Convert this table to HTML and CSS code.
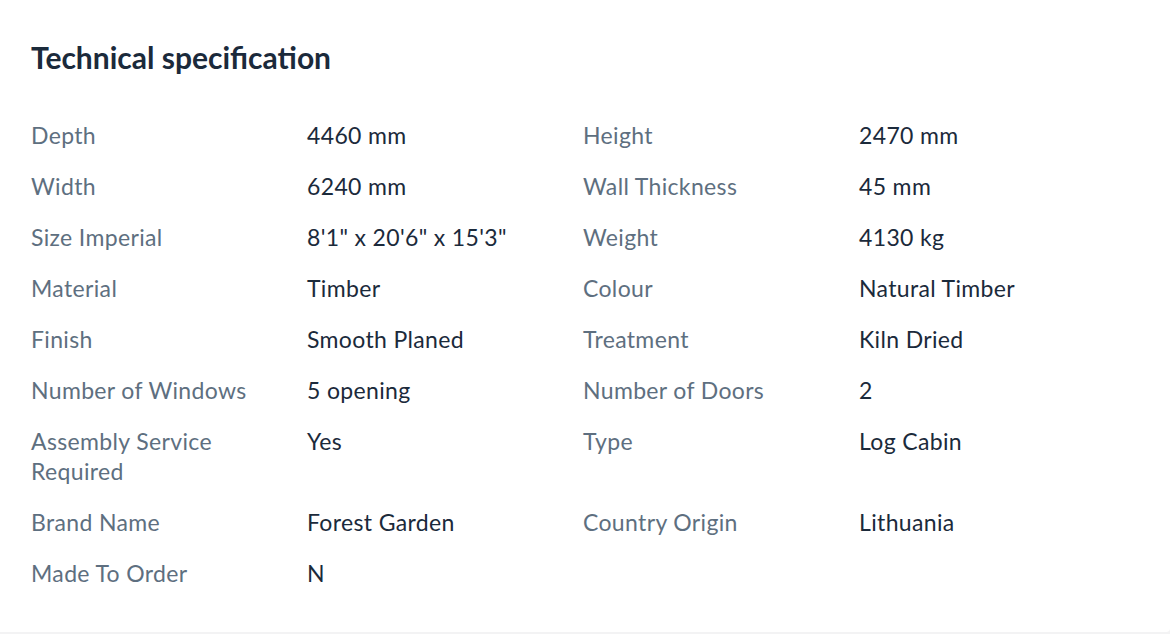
FILE: index.html
```html
<!DOCTYPE html>
<html lang="en">
<head>
<meta charset="utf-8">
<title>Technical specification</title>
<link rel="stylesheet" href="styles.css">
</head>
<body>
<section class="card">
  <h2 class="title">Technical specification</h2>
  <dl class="specs">
    <dt>Depth</dt><dd>4460 mm</dd>
    <dt>Height</dt><dd>2470 mm</dd>
    <dt>Width</dt><dd>6240 mm</dd>
    <dt>Wall Thickness</dt><dd>45 mm</dd>
    <dt>Size Imperial</dt><dd>8'1" x 20'6" x 15'3"</dd>
    <dt>Weight</dt><dd>4130 kg</dd>
    <dt>Material</dt><dd>Timber</dd>
    <dt>Colour</dt><dd>Natural Timber</dd>
    <dt>Finish</dt><dd>Smooth Planed</dd>
    <dt>Treatment</dt><dd>Kiln Dried</dd>
    <dt>Number of Windows</dt><dd>5 opening</dd>
    <dt>Number of Doors</dt><dd>2</dd>
    <dt>Assembly Service Required</dt><dd>Yes</dd>
    <dt>Type</dt><dd>Log Cabin</dd>
    <dt>Brand Name</dt><dd>Forest Garden</dd>
    <dt>Country Origin</dt><dd>Lithuania</dd>
    <dt>Made To Order</dt><dd>N</dd>
  </dl>
</section>
</body>
</html>
```

FILE: styles.css
```css
html, body {
  margin: 0;
  padding: 0;
}
body {
  background: #f3f3f4;
  font-family: Lato, "Noto Sans", sans-serif;
  width: 1170px;
  height: 634px;
  overflow: hidden;
}
.card {
  background: #ffffff;
  padding: 39px 35px 44px 31px;
  border-bottom-right-radius: 4px;
}
.title {
  margin: 0;
  font-size: 30px;
  line-height: 36px;
  font-weight: 700;
  color: #1b2a3b;
}
.specs {
  margin: 45px 0 0;
  display: grid;
  grid-template-columns: repeat(4, 276px);
  row-gap: 21px;
  font-size: 23px;
  letter-spacing: 0.35px;
  line-height: 30px;
}
.specs dt,
.specs dd {
  margin: 0;
  padding-right: 16px;
}
.specs dt {
  color: #5e6f80;
}
.specs dd {
  color: #1b2a3b;
}
```
